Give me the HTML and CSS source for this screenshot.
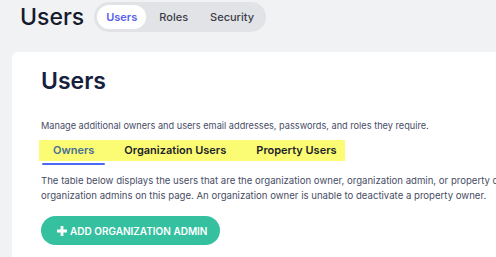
FILE: index.html
```html
<!DOCTYPE html>
<html lang="en">
<head>
    <meta charset="UTF-8">
    <title>Users</title>
    <link rel="stylesheet" href="styles.css">
</head>
<body>

<!-- Page header -->
<div class="page-header">
    <h1 class="page-title">Users</h1>
    <div class="segmented">
        <a href="#" class="segment active">Users</a>
        <a href="#" class="segment">Roles</a>
        <a href="#" class="segment">Security</a>
    </div>
</div>

<!-- Main card -->
<div class="card">
    <h2 class="card-title">Users</h2>
    <p class="lead">Manage additional owners and users email addresses, passwords, and roles they require.</p>

    <div class="tabs">
        <a href="#" class="tab active">Owners</a>
        <a href="#" class="tab">Organization Users</a>
        <a href="#" class="tab">Property Users</a>
    </div>

    <p class="info">The table below displays the users that are the organization owner, organization admin, or property owner. You can add or remove<br>organization admins on this page. An organization owner is unable to deactivate a property owner.</p>

    <button class="btn-add" type="button">
        <svg width="10" height="10" viewBox="0 0 10 10"><path d="M3.6 0h2.8v3.6H10v2.8H6.4V10H3.6V6.4H0V3.6h3.6z" fill="#fff"/></svg>
        ADD ORGANIZATION ADMIN
    </button>
</div>

</body>
</html>
```

FILE: styles.css
```css
/* General Styling */
body {
    margin: 0;
    background-color: #f1f2f4;
    font-family: 'Inter', 'Noto Sans', sans-serif;
    color: #1c2340;
    overflow: hidden;
}

/* Header */
.page-header {
    display: flex;
    align-items: center;
    padding: 2px 0 0 20px;
    height: 30px;
}

.page-title {
    margin: 0;
    font-size: 23px;
    font-weight: 500;
    color: #151b2c;
}

.segmented {
    display: flex;
    gap: 4px;
    margin-left: 10px;
    padding: 3px;
    background-color: #e2e3e7;
    border-radius: 999px;
}

.segment {
    padding: 0 9px;
    line-height: 24px;
    font-size: 11px;
    font-weight: 500;
    color: #3a3d48;
    text-decoration: none;
    border-radius: 999px;
}

.segment.active {
    background: white;
    color: #5661e8;
    font-weight: 600;
}

/* Card */
.card {
    background: white;
    width: 900px;
    margin: 20px 0 0 12px;
    padding: 15px 0 30px 29px;
    border-radius: 6px;
}

.card-title {
    margin: 0;
    font-size: 23px;
    font-weight: 600;
    color: #17203d;
}

.lead {
    margin: 25px 0 7px;
    font-size: 9.2px;
    color: #474d66;
}

.tabs {
    display: inline-flex;
    gap: 8px;
    padding: 0 0 0 3px;
    margin-left: -2px;
    background-color: #fbfb74;
}

.tab {
    position: relative;
    padding: 0 11px;
    line-height: 21px;
    font-size: 11px;
    font-weight: 600;
    color: #1c1f2a;
    text-decoration: none;
}

.tab:last-child {
    padding-right: 8px;
}

.tab.active {
    color: #4a7094;
}

.tab.active::after {
    content: "";
    position: absolute;
    left: 0;
    right: 0;
    bottom: -4px;
    height: 2px;
    background-color: #4b6cf0;
    border-radius: 1px;
}

.info {
    margin: 12px 0 13px;
    font-size: 9.6px;
    line-height: 15px;
    color: #474d66;
}

.btn-add {
    display: flex;
    align-items: center;
    gap: 3px;
    height: 29px;
    padding: 0 13px 0 16px;
    border: none;
    border-radius: 999px;
    background-color: #35c19f;
    color: white;
    font-family: inherit;
    font-size: 10px;
    font-weight: 600;
    cursor: pointer;
}
```
